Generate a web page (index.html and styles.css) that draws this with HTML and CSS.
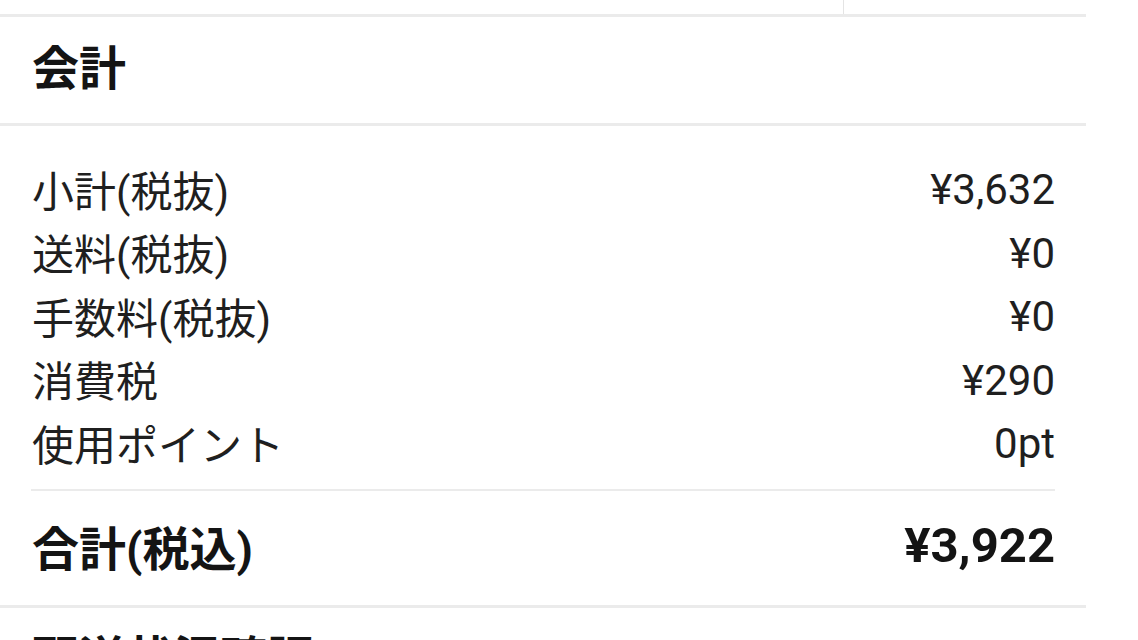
FILE: index.html
```html
<!DOCTYPE html>
<html lang="ja">
<head>
<meta charset="utf-8">
<title>会計</title>
<link rel="stylesheet" href="styles.css">
</head>
<body>
<div class="page">
  <div class="prev">
    <div class="prev-cell prev-main"></div>
    <div class="prev-cell prev-side"></div>
  </div>
  <section class="card">
    <h2 class="card-title">会計</h2>
    <div class="summary">
      <div class="rows">
        <div class="row"><span class="label">小計(税抜)</span><span class="value">¥3,632</span></div>
        <div class="row"><span class="label">送料(税抜)</span><span class="value">¥0</span></div>
        <div class="row"><span class="label">手数料(税抜)</span><span class="value">¥0</span></div>
        <div class="row"><span class="label">消費税</span><span class="value">¥290</span></div>
        <div class="row"><span class="label">使用ポイント</span><span class="value">0pt</span></div>
      </div>
      <div class="total"><span class="total-label">合計(税込)</span><span class="total-value">¥3,922</span></div>
    </div>
  </section>
  <section class="card">
    <h2 class="card-title">配送状況確認</h2>
  </section>
</div>
</body>
</html>
```
FILE: styles.css
```css
html, body {
  margin: 0;
  padding: 0;
  background: #ffffff;
}
body {
  font-family: "Roboto", "Noto Sans CJK JP", sans-serif;
  color: #1c1c1c;
}
.page {
  width: 1138px;
  height: 640px;
  overflow: hidden;
}
.prev {
  display: flex;
  width: 1086px;
  height: 14px;
}
.prev-main {
  width: 843px;
  border-right: 1px solid #e4e4e4;
}
.prev-side {
  flex: 1;
}
.card {
  width: 1086px;
  border-top: 3px solid #ebebeb;
}
.card-title {
  margin: 0;
  height: 94px;
  padding: 0 32px 12px 32px;
  display: flex;
  align-items: center;
  font-family: "Noto Sans CJK JP", sans-serif;
  font-size: 47px;
  font-weight: 700;
  color: #141414;
  border-bottom: 3px solid #ebebeb;
}
.summary {
  padding: 32px 31px 0 31px;
}
.rows {
  padding-bottom: 13px;
}
.row {
  height: 63.5px;
  display: flex;
  align-items: center;
  justify-content: space-between;
}
.label {
  font-size: 42px;
  padding-left: 1px;
  margin-bottom: 3px;
  color: #1f1f1f;
}
.value {
  font-size: 42px;
  color: #1f1f1f;
}
.total {
  height: 109px;
  padding-bottom: 5px;
  border-top: 2px solid #ebebeb;
  display: flex;
  align-items: center;
  justify-content: space-between;
}
.total-label {
  font-size: 47px;
  font-weight: 700;
  padding-left: 1px;
  color: #141414;
}
.total-value {
  font-size: 49px;
  font-weight: 700;
  color: #141414;
}
```
